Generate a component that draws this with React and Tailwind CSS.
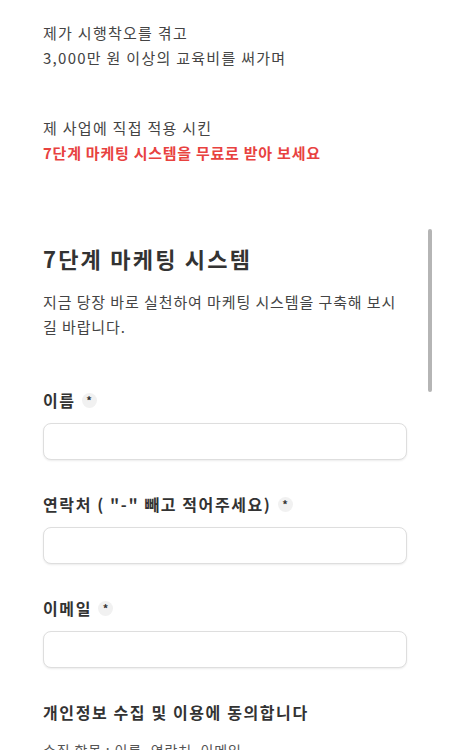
const fields = [
  { label: '이름' },
  { label: '연락처 ( "-" 빼고 적어주세요)' },
  { label: '이메일' },
]

function Required() {
  return (
    <span className="ml-[6px] inline-flex h-[15px] w-[15px] items-center justify-center rounded-full bg-[#f1f1f1] text-[11px] leading-none tracking-normal text-[#333]">
      *
    </span>
  )
}

export default function App() {
  return (
    <div
      className="relative h-[750px] overflow-hidden bg-white px-[43px] pt-[20px] tracking-[0.08em] text-[#444]"
      style={{ fontFamily: '"Noto Sans CJK KR", "Noto Sans", sans-serif' }}
    >
      {/* intro */}
      <p className="text-[15px] leading-[25px]">
        제가 시행착오를 겪고
        <br />
        3,000만 원 이상의 교육비를 써가며
      </p>

      <p className="mt-[45px] text-[15px] leading-[25px]">
        제 사업에 직접 적용 시킨
        <br />
        <span className="font-bold tracking-[0.05em] text-[#e8423f]">7단계 마케팅 시스템을 무료로 받아 보세요</span>
      </p>

      {/* form header */}
      <h2 className="mt-[77px] text-[22px] font-bold leading-[32px] tracking-[0.1em] text-[#333]">7단계 마케팅 시스템</h2>
      <p className="mt-[15px] break-all text-[15px] leading-[25px] tracking-[0.06em]">
        지금 당장 바로 실천하여 마케팅 시스템을 구축해 보시길 바랍니다.
      </p>

      {/* form */}
      <div className="mt-[49px] flex flex-col gap-[32px] tracking-[0.1em]">
        {fields.map((f) => (
          <div key={f.label}>
            <div className="flex items-center text-[16px] font-bold leading-[24px] text-[#333]">
              {f.label}
              <Required />
            </div>
            <input className="mt-[11px] block h-[37px] w-full rounded-lg border border-[#dedede] bg-white shadow-[0_1px_2px_rgba(0,0,0,0.08)]" />
          </div>
        ))}
        <div>
          <div className="text-[16px] font-bold leading-[24px] text-[#333]">개인정보 수집 및 이용에 동의합니다</div>
          <p className="mt-[15px] text-[14px] leading-[22px] tracking-[0.06em] text-[#555]">수집 항목 : 이름, 연락처, 이메일</p>
        </div>
      </div>

      {/* overlay scrollbar */}
      <div className="absolute right-[18px] top-[229px] h-[163px] w-[4px] rounded-full bg-[#b5b5b5]" />
    </div>
  )
}
